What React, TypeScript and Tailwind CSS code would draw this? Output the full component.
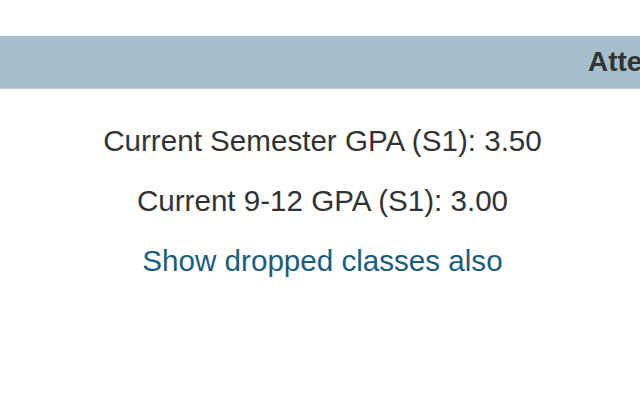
export default function App() {
  return (
    <div className="min-h-[400px] w-[640px] overflow-hidden bg-white font-['Liberation_Sans',Arial,sans-serif] text-[#333333]">
      <div className="pt-[36px]">
        {/* table header, wider than the window */}
        <div className="flex h-[53px] items-start overflow-hidden whitespace-nowrap border-b border-[#c9cccd] bg-[#a4bfcb] pl-[588px] pt-[5px]">
          <span className="text-[28px] font-bold text-[#333333]">Attempted Credits</span>
        </div>
      </div>

      <div className="flex flex-col items-center pl-[5px] pt-[22px] text-[29.6px] leading-[60px]">
        <p>Current Semester GPA (S1): 3.50</p>
        <p>Current 9-12 GPA (S1): 3.00</p>
        <a href="#" className="text-[#1a5d7b]">
          Show dropped classes also
        </a>
      </div>
    </div>
  );
}
